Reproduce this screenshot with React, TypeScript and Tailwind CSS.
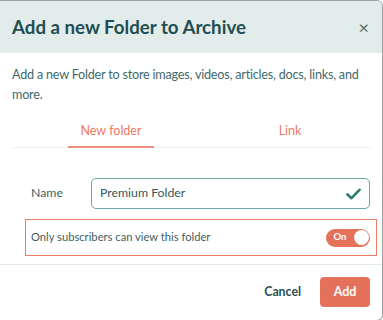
import React from 'react';

export default function App() {
  const [tab, setTab] = React.useState<'folder' | 'link'>('folder');
  const [name, setName] = React.useState('Premium Folder');
  const [on, setOn] = React.useState(true);

  return (
    <div className="w-[383px] h-[320px] bg-white overflow-hidden" style={{ fontFamily: 'Lato, "Open Sans", sans-serif' }}>
      <div className="w-[383px] h-[321px] border border-[#9aa3a3] rounded-tr-[6px] rounded-br-[6px] border-l-0 flex flex-col overflow-hidden">
        {/* header */}
        <div className="h-[52px] bg-[#e2ecea] flex items-center justify-between pl-[12px] pr-[13px] shrink-0">
          <h1 className="text-[18.7px] font-bold text-[#1f4e54]">Add a new Folder to Archive</h1>
          <button className="text-[#5b6b6b] text-[18px] leading-none">×</button>
        </div>

        <p className="px-[12px] pt-[12px] text-[12.6px] tracking-[-0.2px] leading-[20px] text-[#3f6a6d]">
          Add a new Folder to store images, videos, articles, docs, links, and more.
        </p>

        {/* tabs */}
        <div className="mx-[12px] mt-[17px] flex border-b border-[#eef1f1]">
          <button onClick={() => setTab('folder')} className="w-[198px] flex justify-center">
            <span className={`px-[12px] pb-[7px] text-[12.5px] leading-[17px] text-[#ea7a64] ${tab === 'folder' ? 'border-b-2 border-[#ef8f7c] -mb-px' : ''}`}>
              New folder
            </span>
          </button>
          <button onClick={() => setTab('link')} className="flex-1 flex justify-center">
            <span className={`px-[12px] pb-[7px] text-[12.5px] leading-[17px] text-[#ea7a64] ${tab === 'link' ? 'border-b-2 border-[#ef8f7c] -mb-px' : ''}`}>
              Link
            </span>
          </button>
        </div>

        {/* name */}
        <div className="mt-[30px] flex items-center pl-[31px] pr-[12px]">
          <label className="w-[60px] text-[12.3px] text-[#3f5f62]">Name</label>
          <div className="flex-1 h-[31px] border border-[#6aa6a2] rounded-[5px] flex items-center pl-[8px] pr-[8px]">
            <input
              value={name}
              onChange={(e) => setName(e.target.value)}
              className="flex-1 outline-none text-[12.3px] text-[#35585b] bg-transparent"
            />
            <svg width="15" height="12" viewBox="0 0 15 12" fill="none">
              <path d="M1.5 6.5 L5.5 10.2 L13.5 1.8" stroke="#2f7a70" strokeWidth="2.6" strokeLinecap="round" strokeLinejoin="round" />
            </svg>
          </div>
        </div>

        {/* subscribers toggle */}
        <div className="mt-[10px] ml-[25px] mr-[5px] h-[37px] border border-[#ee7b66] flex items-center justify-between pl-[5px] pr-[6px]">
          <span className="text-[11.2px] text-[#3f5f62]">Only subscribers can view this folder</span>
          <button
            onClick={() => setOn(!on)}
            className={`w-[44px] h-[18px] rounded-full flex items-center px-[1.5px] ${on ? 'bg-[#e4725b] justify-between' : 'bg-[#c9d2d2] justify-start'}`}
          >
            {on && <span className="text-white text-[9.5px] font-bold pl-[6px]">On</span>}
            <span className="w-[15px] h-[15px] rounded-full bg-white" />
          </button>
        </div>

        <div className="mt-[8px] border-t border-[#e4eaea]" />

        {/* footer */}
        <div className="flex items-center justify-end gap-[19px] pr-[12px] pt-[12px]">
          <button className="text-[12.3px] font-bold text-[#284f55]">Cancel</button>
          <button className="w-[50px] h-[30px] rounded-[4px] bg-[#e4725b] text-white text-[12.5px] font-bold">Add</button>
        </div>
      </div>
    </div>
  );
}
